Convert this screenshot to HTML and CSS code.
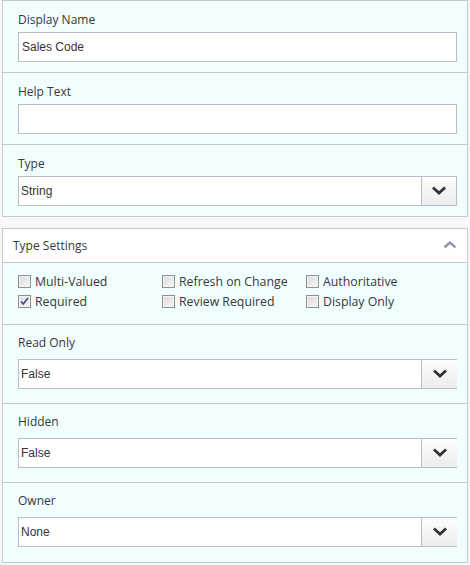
FILE: index.html
```html
<!DOCTYPE html>
<html>
<head>
<meta charset="utf-8">
<link rel="stylesheet" href="styles.css">
</head>
<body>
<div class="page">
  <section class="panel">
    <div class="field">
      <div class="field-label">Display Name</div>
      <div class="input">Sales Code</div>
    </div>
    <div class="field">
      <div class="field-label">Help Text</div>
      <div class="input"></div>
    </div>
    <div class="field">
      <div class="field-label">Type</div>
      <div class="select">
        <span class="select-value">String</span>
        <span class="select-btn"><svg width="14" height="10" viewBox="0 0 14 10"><path d="M2 2.5 L7 7 L12 2.5" fill="none" stroke="#333" stroke-width="2.8" stroke-linecap="square"/></svg></span>
      </div>
    </div>
  </section>

  <section class="panel">
    <header class="panel-head">
      <span class="panel-title">Type Settings</span>
      <svg class="chev-up" width="14" height="9" viewBox="0 0 14 9"><path d="M2.5 6.5 L7 2.5 L11.5 6.5" fill="none" stroke="#8a97aa" stroke-width="2.4" stroke-linecap="square"/></svg>
    </header>
    <div class="checks">
      <label class="check"><span class="box"></span>Multi-Valued</label>
      <label class="check"><span class="box"></span>Refresh on Change</label>
      <label class="check"><span class="box"></span>Authoritative</label>
      <label class="check"><span class="box checked"><svg width="11" height="11" viewBox="0 0 11 11"><path d="M2 5.5 L4.3 8 L9 2" fill="none" stroke="#3b4c8c" stroke-width="1.6"/></svg></span>Required</label>
      <label class="check"><span class="box"></span>Review Required</label>
      <label class="check"><span class="box"></span>Display Only</label>
    </div>
    <div class="field field-wide">
      <div class="field-label">Read Only</div>
      <div class="select select-open">
        <span class="select-value">False</span>
        <span class="select-btn"><svg width="14" height="10" viewBox="0 0 14 10"><path d="M2 2.5 L7 7 L12 2.5" fill="none" stroke="#333" stroke-width="2.8" stroke-linecap="square"/></svg></span>
      </div>
    </div>
    <div class="field field-wide">
      <div class="field-label">Hidden</div>
      <div class="select select-open">
        <span class="select-value">False</span>
        <span class="select-btn"><svg width="14" height="10" viewBox="0 0 14 10"><path d="M2 2.5 L7 7 L12 2.5" fill="none" stroke="#333" stroke-width="2.8" stroke-linecap="square"/></svg></span>
      </div>
    </div>
    <div class="field field-wide">
      <div class="field-label">Owner</div>
      <div class="select select-open">
        <span class="select-value">None</span>
        <span class="select-btn"><svg width="14" height="10" viewBox="0 0 14 10"><path d="M2 2.5 L7 7 L12 2.5" fill="none" stroke="#333" stroke-width="2.8" stroke-linecap="square"/></svg></span>
      </div>
    </div>
  </section>
</div>
</body>
</html>
```

FILE: styles.css
```css
html, body {
  margin: 0;
  padding: 0;
  background: #f7f8fa;
}

.page {
  padding: 0 2px;
  font-family: "Open Sans", "DejaVu Sans", sans-serif;
  font-size: 12px;
  color: #333;
}

.panel {
  border: 1px solid #c6c8cb;
  background: #f0fefe;
  margin-bottom: 11px;
}

.field {
  padding: 9px 10px 10px 15px;
  border-bottom: 1px solid #c6c8cb;
}

.field:last-child {
  border-bottom: none;
}

.field-label {
  line-height: 19px;
  height: 18px;
  margin-bottom: 4px;
  color: #383838;
}

.field-wide {
  padding: 8px 10px 14px 15px;
}

.field-wide .field-label {
  margin-bottom: 8px;
}

.field-wide:last-child {
  padding-bottom: 15px;
}

.input,
.select {
  box-sizing: border-box;
  height: 30px;
  border: 1px solid #b9bdcb;
  background: #fff;
  font-family: "Liberation Sans", Arial, sans-serif;
  font-size: 12px;
  line-height: 28px;
  color: #333;
}

.input {
  padding: 0 3px;
}

.select {
  display: flex;
}

.select-value {
  flex: 1;
  padding: 0 2px;
}

.select-btn {
  width: 34px;
  border-left: 1px solid #b9bdcb;
  background: linear-gradient(#fdfdfd, #ececec);
  display: flex;
  align-items: center;
  justify-content: center;
}

.select-open {
  border-right: none;
}

.select-open .select-btn {
  width: 35px;
}

.panel-head {
  height: 33px;
  background: #fff;
  border-bottom: 1px solid #c6c8cb;
  display: flex;
  align-items: center;
  justify-content: space-between;
  padding: 0 10px 0 10px;
}

.panel-title {
  font-size: 12px;
  color: #383838;
}

.chev-up {
  display: block;
  margin-top: -3px;
}

.checks {
  display: grid;
  grid-template-columns: 144px 144px 1fr;
  padding: 8px 10px 13px 15px;
  border-bottom: 1px solid #c6c8cb;
}

.check {
  display: flex;
  align-items: center;
  height: 20px;
  gap: 4px;
  font-size: 12.3px;
  color: #383838;
}

.box {
  box-sizing: border-box;
  flex: none;
  width: 13px;
  height: 13px;
  border: 1px solid #8e8f91;
  background: linear-gradient(135deg, #d9d9d9, #f7f7f7);
  box-shadow: inset 0 0 0 1px #f3f3f3;
  display: flex;
  align-items: center;
  justify-content: center;
}

.box svg {
  display: block;
}
```
